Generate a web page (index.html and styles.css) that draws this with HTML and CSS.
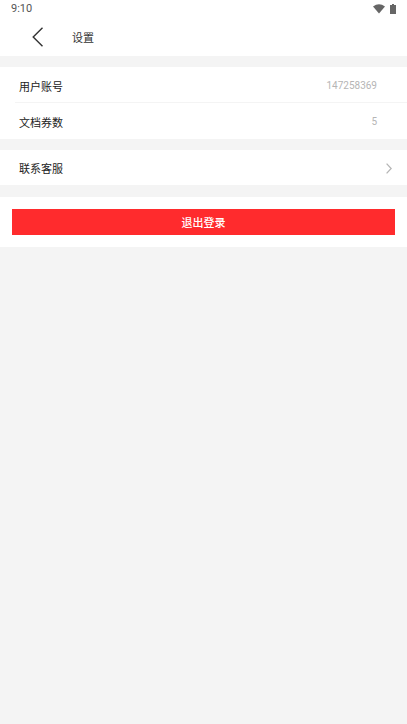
FILE: index.html
```html
<!DOCTYPE html>
<html lang="zh-CN">
<head>
<meta charset="utf-8">
<meta name="viewport" content="width=device-width, initial-scale=1">
<title>设置</title>
<link rel="stylesheet" href="styles.css">
</head>
<body>
<header class="top">
  <div class="status">
    <span>9:10</span>
    <span class="status-icons">
      <svg width="12" height="10" viewBox="0 0 12 10" aria-hidden="true"><path d="M0 2.5Q6-2 12 2.5L6 9.5Z" fill="#666"/></svg>
      <svg width="6" height="10" viewBox="0 0 6 10" aria-hidden="true"><path d="M2 0h2v1h2v9H0V1h2Z" fill="#666"/></svg>
    </span>
  </div>
  <div class="nav">
    <button class="back" type="button" aria-label="返回">
      <svg width="12" height="20" viewBox="0 0 12 20" aria-hidden="true"><path d="M10.5 .8L1.2 10l9.3 9.2" fill="none" stroke="#333" stroke-width="1.4"/></svg>
    </button>
    <h1 class="title">设置</h1>
  </div>
</header>
<main>
  <section class="group">
    <div class="row"><span>用户账号</span><span class="value">147258369</span></div>
    <div class="row row-divided"><span>文档券数</span><span class="value">5</span></div>
  </section>
  <section class="group">
    <a class="row row-link" href="#service"><span>联系客服</span>
      <svg width="6" height="11" viewBox="0 0 6 11" aria-hidden="true"><path d="M.6 .6L5.2 5.5.6 10.4" fill="none" stroke="#b5b5b5" stroke-width="1.3"/></svg>
    </a>
  </section>
  <section class="group action">
    <button class="logout" type="button">退出登录</button>
  </section>
</main>
</body>
</html>
```
FILE: styles.css
```css
* {
  box-sizing: border-box;
}

body {
  margin: 0;
  background: #f4f4f4;
  color: #222;
  font: 11px/16px "Noto Sans CJK SC", sans-serif;
}

button {
  border: 0;
  padding: 0;
  font: inherit;
  cursor: pointer;
}

svg {
  display: block;
}

.top,
.group {
  background: #fff;
}

.status {
  display: flex;
  align-items: center;
  justify-content: space-between;
  height: 18px;
  padding: 0 11px;
  color: #555;
  font-family: Roboto, sans-serif;
}

.status-icons {
  display: flex;
  gap: 5px;
}

.nav {
  display: flex;
  align-items: center;
  height: 38px;
  padding-left: 32px;
}

.back {
  width: 40px;
  background: none;
}

.title {
  margin: 0;
  font-size: 11px;
  font-weight: 400;
  color: #333;
}

.group {
  margin-top: 11px;
}

.row {
  display: flex;
  align-items: center;
  justify-content: space-between;
  height: 36px;
  padding: 1px 30px 0 19px;
  color: inherit;
  text-decoration: none;
}

.row-divided {
  position: relative;
}

.row-divided::before {
  content: "";
  position: absolute;
  top: -1px;
  left: 15px;
  right: 0;
  height: 1px;
  background: #f4f4f4;
}

.row-link {
  height: 35px;
  padding-right: 15px;
}

.value {
  font-family: Roboto, sans-serif;
  font-size: 10px;
  color: #b5b5b5;
}

.action {
  padding: 12px;
}

.group + .action {
  margin-top: 12px;
}

.logout {
  display: block;
  width: 100%;
  height: 26px;
  background: #ff2b2d;
  color: #fff;
  font-weight: 500;
}
```
